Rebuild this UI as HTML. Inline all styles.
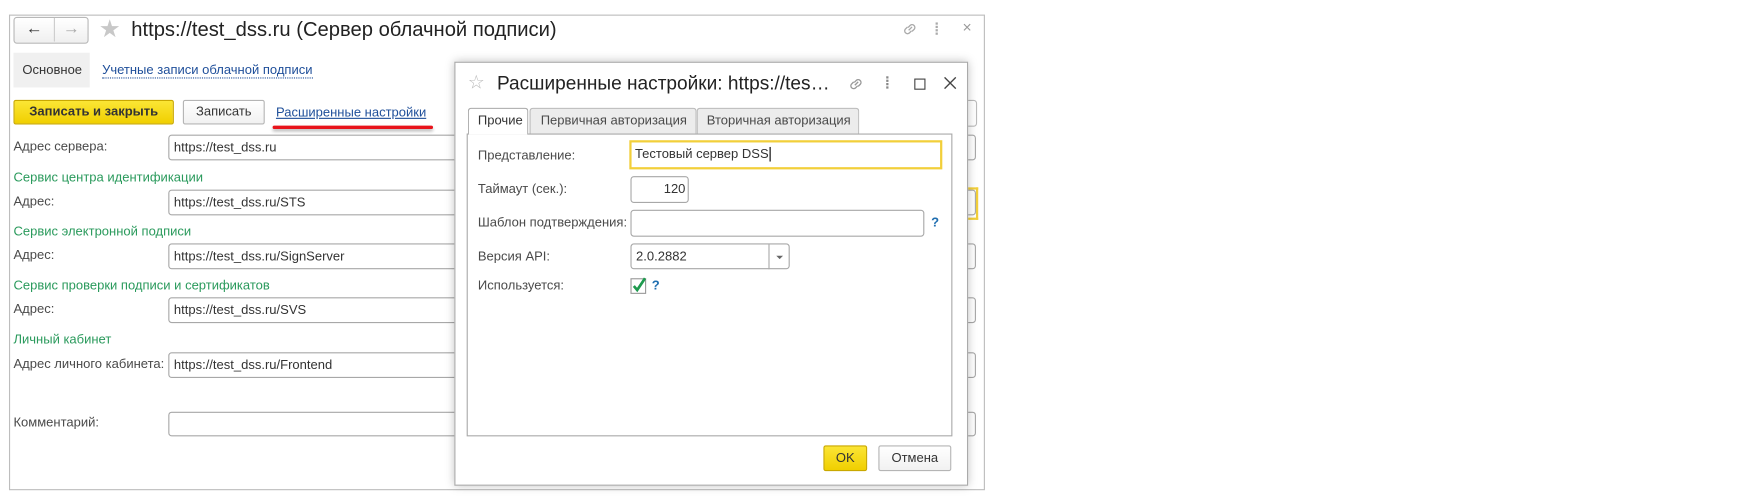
<!DOCTYPE html>
<html><head><meta charset="utf-8"><style>
html,body{margin:0;padding:0;background:#fff;width:1759px;height:500px;overflow:hidden}
#w{position:absolute;left:0;top:0;width:1568px;height:446px;transform:scale(1.1218);transform-origin:0 0;font-family:"Liberation Sans",Arial,sans-serif;font-size:11.6px;color:#4a4a4a}
.a{position:absolute}
.t{position:absolute;white-space:nowrap;line-height:14px}
.in{position:absolute;border:1px solid #a8a8a8;border-radius:3px;background:#fff;box-sizing:border-box;color:#333;font-size:11.6px;line-height:22px;padding-left:4px;white-space:nowrap;overflow:hidden}
.g{color:#2a9a5c}
.lnk{color:#1f4f9a;text-decoration:underline}
.btn{position:absolute;box-sizing:border-box;border:1px solid #b5b5b5;border-radius:2px;background:linear-gradient(#fff,#f1f1f1);text-align:center;color:#333;line-height:20px}
.yb{background:linear-gradient(#fbe535,#f0cf00);border-color:#c9a800;color:#333}
</style></head><body><div id="w">
<div class="a" style="left:8px;top:13px;width:868px;height:422px;border:1.5px solid #bdbdbd;background:#fff"></div>
<div class="a" style="left:12px;top:15px;width:65px;height:22px;border:1px solid #b8b8b8;border-radius:3px;background:linear-gradient(#fff,#efefef)"></div>
<div class="a" style="left:48px;top:16px;width:1px;height:21px;background:#ccc"></div>
<div class="t" style="left:23px;top:19px;font-size:15px;color:#333;font-weight:bold">←</div>
<div class="t" style="left:56px;top:19px;font-size:15px;color:#aaa;font-weight:bold">→</div>
<div class="t" style="left:88px;top:14px;font-size:22px;color:#c8c8c8;line-height:24px">★</div>
<div class="t" style="left:117px;top:16px;font-size:18px;color:#222;line-height:20px">https://test_dss.ru (Сервер облачной подписи)</div>
<svg class="a" style="left:803px;top:18px" width="16" height="16" viewBox="0 0 16 16"><path d="M7 9l3-3M6 6l-2 2a2.5 2.5 0 003.5 3.5l2-2M10 10l2-2A2.5 2.5 0 008.5 4.5l-2 2" stroke="#aaa" stroke-width="1.2" fill="none"/></svg>
<div class="a" style="left:834px;top:20px;width:2px;height:2px;background:#aaa;box-shadow:0 3px #aaa,0 6px #aaa,0 9px #aaa"></div>
<div class="t" style="left:858px;top:17px;font-size:14px;color:#999">×</div>
<div class="a" style="left:12px;top:47px;width:68px;height:31px;background:#f0f0f0"></div>
<div class="t" style="left:20px;top:56px;color:#333">Основное</div>
<div class="t" style="left:91px;top:56px;color:#1f4f9a;border-bottom:1px dotted #1f4f9a;line-height:13px">Учетные записи облачной подписи</div>
<div class="btn yb" style="left:12px;top:89px;width:143px;height:22px;font-weight:bold">Записать и закрыть</div>
<div class="btn" style="left:163px;top:89px;width:73px;height:22px">Записать</div>
<div class="t lnk" style="left:246px;top:94px">Расширенные настройки</div>
<div class="a" style="left:243px;top:112px;width:143px;height:3px;background:#e8141b;border-radius:2px;box-shadow:0 2px 3px rgba(0,0,0,.3)"></div>
<div class="a" style="left:855px;top:89px;width:14px;height:22px;border:1px solid #bbb;border-radius:3px"></div>

<div class="t" style="left:12px;top:124px">Адрес сервера:</div>
<div class="in" style="left:150px;top:120px;width:720px;height:23px">https://test_dss.ru</div>
<div class="t g" style="left:12px;top:152px">Сервис центра идентификации</div>
<div class="t" style="left:12px;top:173px">Адрес:</div>
<div class="in" style="left:150px;top:169px;width:720px;height:23px">https://test_dss.ru/STS</div>
<div class="a" style="left:860px;top:167px;width:10px;height:25px;border:2px solid #f2cf3a;border-left:none"></div>
<div class="t g" style="left:12px;top:200px">Сервис электронной подписи</div>
<div class="t" style="left:12px;top:221px">Адрес:</div>
<div class="in" style="left:150px;top:217px;width:720px;height:23px">https://test_dss.ru/SignServer</div>
<div class="t g" style="left:12px;top:248px">Сервис проверки подписи и сертификатов</div>
<div class="t" style="left:12px;top:269px">Адрес:</div>
<div class="in" style="left:150px;top:265px;width:720px;height:23px">https://test_dss.ru/SVS</div>
<div class="t g" style="left:12px;top:296px">Личный кабинет</div>
<div class="t" style="left:12px;top:318px">Адрес личного кабинета:</div>
<div class="in" style="left:150px;top:314px;width:720px;height:23px">https://test_dss.ru/Frontend</div>
<div class="t" style="left:12px;top:370px">Комментарий:</div>
<div class="in" style="left:150px;top:367px;width:720px;height:22px"></div>

<div class="a" style="left:405px;top:55px;width:456px;height:376px;border:1px solid #aaa;background:#fff;box-shadow:0 0 8px rgba(0,0,0,.25)"></div>
<div class="t" style="left:417px;top:64px;font-size:17px;color:#bbb;line-height:20px">☆</div>
<div class="t" style="left:443px;top:65px;font-size:17px;color:#222;line-height:20px">Расширенные настройки: https://tes…</div>
<svg class="a" style="left:755px;top:67px" width="16" height="16" viewBox="0 0 16 16"><path d="M7 9l3-3M6 6l-2 2a2.5 2.5 0 003.5 3.5l2-2M10 10l2-2A2.5 2.5 0 008.5 4.5l-2 2" stroke="#999" stroke-width="1.2" fill="none"/></svg>
<div class="a" style="left:790px;top:68px;width:2px;height:2px;background:#888;box-shadow:0 3px #888,0 6px #888,0 9px #888"></div>
<div class="a" style="left:815px;top:70px;width:8px;height:8px;border:1px solid #444"></div>
<svg class="a" style="left:841px;top:68px" width="12" height="12"><path d="M1 1L11 11M11 1L1 11" stroke="#444" stroke-width="1.2"/></svg>

<div class="a" style="left:416px;top:119px;width:431px;height:268px;border:1px solid #aaa;background:#fff"></div>
<div class="a" style="left:417px;top:96px;width:54px;height:24px;border:1px solid #aaa;border-bottom:none;border-radius:3px 3px 0 0;background:#fff;box-sizing:border-box"></div>
<div class="t" style="left:426px;top:101px;color:#333">Прочие</div>
<div class="a" style="left:472px;top:96px;width:149px;height:23px;border:1px solid #bbb;border-bottom:none;border-radius:3px 3px 0 0;background:#ececec;box-sizing:border-box"></div>
<div class="t" style="left:482px;top:101px">Первичная авторизация</div>
<div class="a" style="left:621px;top:96px;width:145px;height:23px;border:1px solid #bbb;border-bottom:none;border-radius:3px 3px 0 0;background:#ececec;box-sizing:border-box"></div>
<div class="t" style="left:630px;top:101px">Вторичная авторизация</div>

<div class="t" style="left:426px;top:132px">Представление:</div>
<div class="in" style="left:561px;top:125px;width:279px;height:26px;border:2px solid #f2cf3a;border-radius:0;line-height:22px;padding-left:3px">Тестовый сервер DSS<span style="border-left:1px solid #000;margin-left:1px"></span></div>
<div class="t" style="left:426px;top:162px">Таймаут (сек.):</div>
<div class="in" style="left:562px;top:157px;width:52px;height:24px;text-align:right;padding-right:2px">120</div>
<div class="t" style="left:426px;top:192px">Шаблон подтверждения:</div>
<div class="in" style="left:562px;top:187px;width:262px;height:24px"></div>
<div class="t" style="left:830px;top:192px;color:#1f6eb0;font-weight:bold">?</div>
<div class="t" style="left:426px;top:222px">Версия API:</div>
<div class="in" style="left:562px;top:217px;width:142px;height:23px">2.0.2882</div>
<div class="a" style="left:685px;top:218px;width:1px;height:22px;background:#aaa"></div>
<div class="a" style="left:692px;top:228px;border-left:3px solid transparent;border-right:3px solid transparent;border-top:3px solid #666"></div>
<div class="t" style="left:426px;top:248px">Используется:</div>
<div class="a" style="left:562px;top:248px;width:14px;height:14px;border:1px solid #999;box-sizing:border-box"></div>
<svg class="a" style="left:562px;top:246px" width="16" height="16"><path d="M3 9l3 3.5L13 2" stroke="#1e9a4e" stroke-width="2.4" fill="none"/></svg>
<div class="t" style="left:581px;top:248px;color:#1f6eb0;font-weight:bold">?</div>

<div class="btn yb" style="left:734px;top:397px;width:39px;height:23px;line-height:21px">OK</div>
<div class="btn" style="left:783px;top:397px;width:65px;height:23px;line-height:21px">Отмена</div>
</div></body></html>
